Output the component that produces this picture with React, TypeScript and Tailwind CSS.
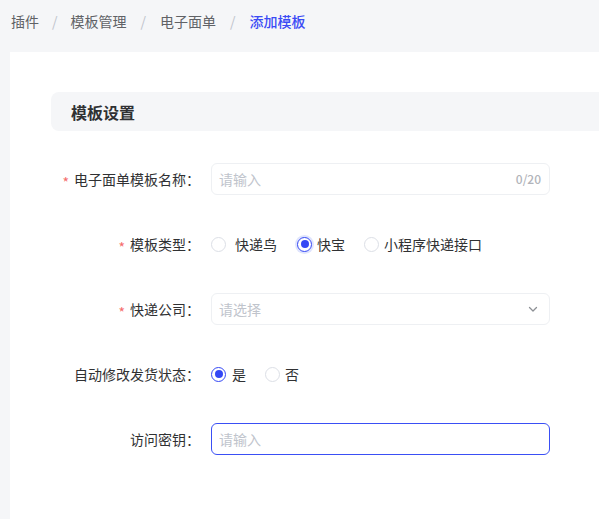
import React from "react";

const font = { fontFamily: '"Noto Sans CJK SC", "Noto Sans", sans-serif' };

function Radio({ checked, halo, label, gap }: { checked?: boolean; halo?: boolean; label: string; gap: string }) {
  return (
    <label className="flex items-center">
      {checked ? (
        <span
          className={
            "flex h-[15px] w-[15px] items-center justify-center rounded-full border-[1.5px] border-[#3448f5] bg-white " +
            (halo ? "shadow-[0_0_0_2px_#dfe4fd]" : "")
          }
        >
          <span className="h-[8px] w-[8px] rounded-full bg-[#3448f5]" />
        </span>
      ) : (
        <span className="h-[15px] w-[15px] rounded-full border border-[#dcdfe6] bg-white" />
      )}
      <span className={"text-[14px] text-[#303133] " + gap}>{label}</span>
    </label>
  );
}

function Label({ text, required }: { text: string; required?: boolean }) {
  return (
    <div className="flex w-[160px] shrink-0 items-center justify-end pr-[11px] text-[14px] text-[#303133]">
      {required && <span className="mr-[5px] mt-[6px] text-[#f56c6c]">*</span>}
      <span>{text}：</span>
    </div>
  );
}

export default function App() {
  return (
    <div className="h-[519px] w-[599px] overflow-hidden bg-[#f5f6f8]" style={font}>
      <div className="flex h-[42px] items-center pl-[11px] text-[14px] text-[#606266]">
        <span>插件</span>
        <span className="mx-[13px] text-[#c0c4cc]">/</span>
        <span>模板管理</span>
        <span className="mx-[14px] text-[#c0c4cc]">/</span>
        <span>电子面单</span>
        <span className="mx-[14px] text-[#c0c4cc]">/</span>
        <span className="font-medium text-[#3a4bf5]">添加模板</span>
      </div>
      <div className="ml-[10px] mt-[10px] h-[600px] w-[640px] bg-white pl-[41px] pt-[40px]">
        <div className="flex h-[39px] w-[580px] items-center rounded-lg bg-[#f5f6f8] pl-5 text-[16px] font-bold text-[#303133]">
          模板设置
        </div>
        <div className="mt-8 flex flex-col gap-[33px]">
          <div className="flex h-[32px] items-center">
            <Label text="电子面单模板名称" required />
            <div className="flex h-[32px] w-[339px] items-center justify-between rounded-md border border-[#eef0f3] pl-[7px] pr-[8px]">
              <span className="text-[14px] text-[#c0c4cc]">请输入</span>
              <span className="text-[12px] font-medium text-[#b1b4ba]">0/20</span>
            </div>
          </div>
          <div className="flex h-[32px] items-center">
            <Label text="模板类型" required />
            <div className="flex items-center">
              <Radio label="快递鸟" gap="ml-[9px]" />
              <div className="ml-[20px]">
                <Radio label="快宝" checked halo gap="ml-[5px]" />
              </div>
              <div className="ml-[19px]">
                <Radio label="小程序快递接口" gap="ml-[5px]" />
              </div>
            </div>
          </div>
          <div className="flex h-[32px] items-center">
            <Label text="快递公司" required />
            <div className="flex h-[32px] w-[339px] items-center justify-between rounded-md border border-[#eef0f3] pl-[7px] pr-[11px]">
              <span className="text-[14px] text-[#c0c4cc]">请选择</span>
              <svg width="10" height="10" viewBox="0 0 10 10" fill="none">
                <path d="M1.5 3.5L5 7L8.5 3.5" stroke="#8d9095" strokeWidth="1.3" strokeLinecap="round" strokeLinejoin="round" />
              </svg>
            </div>
          </div>
          <div className="flex h-[32px] items-center">
            <Label text="自动修改发货状态" />
            <div className="flex items-center">
              <Radio label="是" checked gap="ml-[6px]" />
              <div className="ml-[19px]">
                <Radio label="否" gap="ml-[5px]" />
              </div>
            </div>
          </div>
          <div className="flex h-[32px] items-center">
            <Label text="访问密钥" />
            <div className="flex h-[32px] w-[339px] items-center rounded-md border border-[#3a4ff5] pl-[7px]">
              <span className="text-[14px] text-[#c0c4cc]">请输入</span>
            </div>
          </div>
        </div>
      </div>
    </div>
  );
}
